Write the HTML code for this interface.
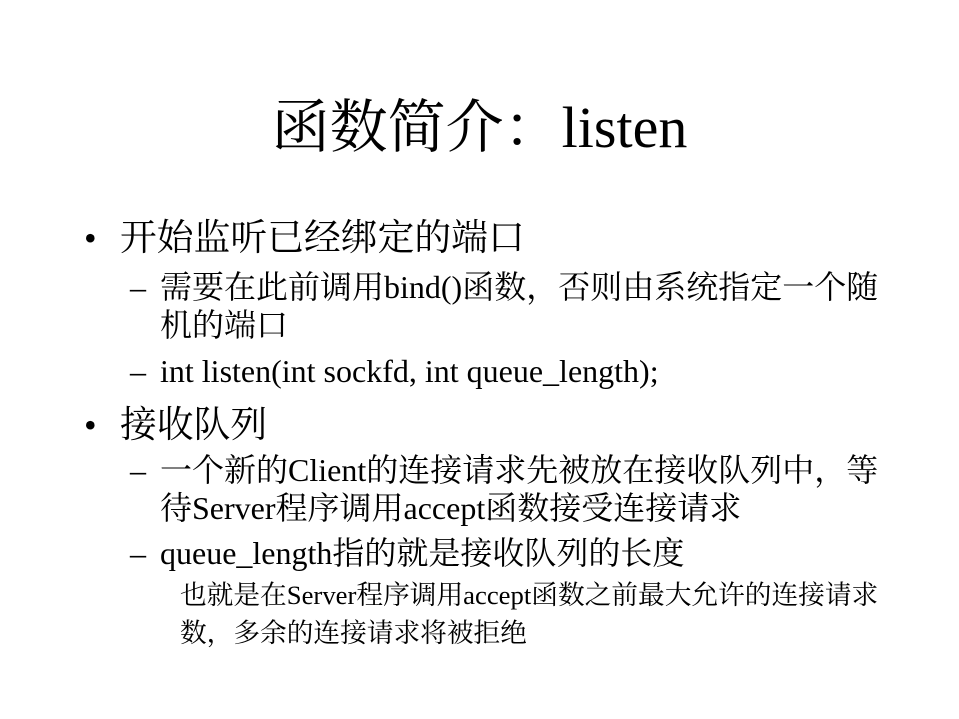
<!DOCTYPE html>
<html><head><meta charset="utf-8"><style>
html,body{margin:0;padding:0;background:#fff;}
body{width:959px;height:719px;position:relative;overflow:hidden;font-family:"Liberation Serif","Noto Serif CJK SC",serif;color:#000;}
.l{position:absolute;white-space:nowrap;height:60px;line-height:60px;}
</style></head><body>
<div class="l" style="left:0;width:959px;text-align:center;top:98px;font-size:58px;">函数简介：listen</div>

<div class="l" style="left:84px;top:208px;font-size:36px;">•</div>
<div class="l" style="left:120px;top:208px;font-size:36.8px;">开始监听已经绑定的端口</div>

<div class="l" style="left:130px;top:257px;font-size:32px;">–</div>
<div class="l" style="left:160px;top:257px;font-size:32px;">需要在此前调用bind()函数，否则由系统指定一个随</div>
<div class="l" style="left:160px;top:295px;font-size:32px;">机的端口</div>
<div class="l" style="left:130px;top:341px;font-size:32px;">–</div>
<div class="l" style="left:160px;top:341px;font-size:32px;">int listen(int sockfd, int queue_length);</div>

<div class="l" style="left:84px;top:395px;font-size:36px;">•</div>
<div class="l" style="left:120px;top:395px;font-size:36.8px;">接收队列</div>

<div class="l" style="left:130px;top:440px;font-size:32px;">–</div>
<div class="l" style="left:160px;top:440px;font-size:32px;">一个新的Client的连接请求先被放在接收队列中，等</div>
<div class="l" style="left:160px;top:478px;font-size:32px;">待Server程序调用accept函数接受连接请求</div>
<div class="l" style="left:130px;top:523px;font-size:32px;">–</div>
<div class="l" style="left:160px;top:523px;font-size:32px;">queue_length指的就是接收队列的长度</div>

<div class="l" style="left:180px;top:565px;font-size:26.7px;">也就是在Server程序调用accept函数之前最大允许的连接请求</div>
<div class="l" style="left:180px;top:603px;font-size:26.7px;">数，多余的连接请求将被拒绝</div>
</body></html>
